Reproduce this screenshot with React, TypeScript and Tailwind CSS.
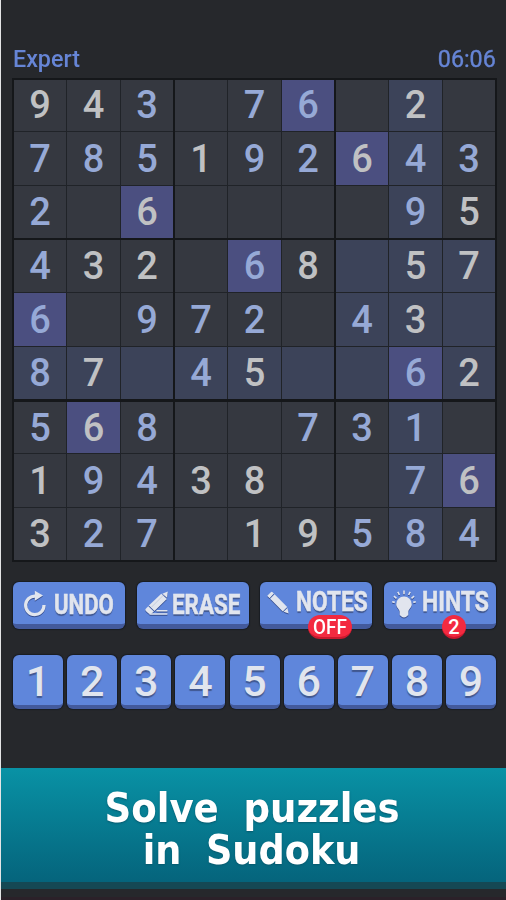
import type { ReactNode } from 'react';

// Each row lists nine cells; "*" marks a player's digit, "." an empty cell.
const ROWS = [
  '9 4 3* . 7* 6* . 2 .',
  '7* 8* 5* 1 9* 2* 6 4* 3*',
  '2* . 6 . . . . 9* 5',
  '4* 3 2 . 6* 8 . 5 7',
  '6* . 9* 7* 2* . 4* 3 .',
  '8* 7 . 4* 5 . . 6* 2',
  '5* 6 8* . . 7* 3* 1* .',
  '1 9* 4* 3 8 . . 7* 6',
  '3 2* 7* . 1 9 5* 8* 4*',
].map((row) => row.split(' '));

const SELECTED = { row: 5, col: 7 };

function Cell({ row, col }: { row: number; col: number }) {
  const value = ROWS[row][col];
  const digit = value[0] === '.' ? '' : value[0];
  const related =
    row === SELECTED.row ||
    col === SELECTED.col ||
    (Math.floor(row / 3) === 1 && Math.floor(col / 3) === 2);
  const bg = digit === '6' ? 'bg-[#4b4f80]' : related ? 'bg-[#3c4359]' : 'bg-[#353840]';
  const color = value.endsWith('*') ? 'text-[#96a9d6]' : 'text-[#c0c1c3]';
  const nudge = row === 0 ? 'pb-px' : row % 3 === 1 ? 'pt-px' : '';
  return (
    <div className={`flex items-center justify-center text-[38px] leading-none font-medium ${nudge} ${bg} ${color}`}>
      {digit}
    </div>
  );
}

const BANDS = [
  'grid-rows-[51px_53px_52px]',
  'mt-[2px] grid-rows-[52px_53px_52px]',
  'mt-[3px] grid-rows-[51px_53px_52px]',
];

function Board() {
  return (
    <div className="mx-[12px] mt-[3px] w-[485px] border-2 border-[#15171a] bg-[#15171a]">
      {BANDS.map((rows, band) => (
        <div key={band} className="flex gap-[2px]">
          {[0, 1, 2].map((box) => (
            <div key={box} className={`grid grid-cols-[52px_53px_52px] gap-px bg-[#202328] ${rows}`}>
              {Array.from({ length: 9 }, (_, i) => (
                <Cell key={i} row={band * 3 + Math.floor(i / 3)} col={box * 3 + (i % 3)} />
              ))}
            </div>
          ))}
        </div>
      ))}
    </div>
  );
}

const ICON = 'block shrink-0 overflow-visible drop-shadow-[0_1px_0_rgba(40,60,120,0.8)]';

function UndoIcon() {
  return (
    <svg className={ICON} width="24" height="28" viewBox="0 0 24 28">
      <path d="M12.5 6.2A9.2 9.2 0 1 0 21 15" fill="none" stroke="#e1e5ee" strokeWidth="3.2" />
      <path d="M11.8 0.8L20 5.6L11.8 10.8Z" fill="#e1e5ee" />
    </svg>
  );
}

function EraseIcon() {
  return (
    <svg className={ICON} width="24" height="26" viewBox="0 0 24 26">
      <path d="M17.3 3.8L22.8 1.4L22 7.8Z" fill="#e1e5ee" />
      <path d="M16.3 3.7L21.8 8.9L9.5 21L3.8 15.5Z" fill="#e1e5ee" />
      <path d="M3.2 16.2L8.8 21.6L7.2 23Q5 24.8 3 23L0.8 21Q-0.2 19.8 0.8 18.7Z" fill="#e1e5ee" />
      <path d="M19 4.6L6.6 17" stroke="#a9b2c8" strokeWidth="0.5" />
      <path d="M11.5 20.7H22.4M4.5 24H22.4" stroke="#e1e5ee" strokeWidth="1.5" />
    </svg>
  );
}

function PencilIcon() {
  return (
    <svg className={ICON} width="22" height="24" viewBox="0 0 22 24">
      <path d="M0.5 4.4L3.8 1.2Q4.7 0.5 5.6 1.3L6.9 2.6L2.6 7.2L0.9 5.6Q0 4.9 0.5 4.4Z" fill="#e1e5ee" />
      <path d="M3.2 7.8L7.6 3.2L20.2 16L15.8 20.5Z" fill="#e1e5ee" />
      <path d="M20.5 17L21.6 22.6L16.6 20.8Z" fill="#e1e5ee" />
    </svg>
  );
}

function BulbIcon() {
  return (
    <svg className={ICON} width="24" height="28" viewBox="0 0 24 28">
      <path
        d="M12 6.6A7.8 7.8 0 0 1 19.8 14.3C19.8 18 16.5 19 16.3 22V25Q16.3 25.7 15.2 25.7Q14.5 27.4 12 27.4Q9.5 27.4 8.8 25.7Q7.7 25.7 7.7 25V22C7.5 19 4.2 18 4.2 14.3A7.8 7.8 0 0 1 12 6.6Z"
        fill="#e1e5ee"
      />
      <path
        d="M12 0.5V4.3M5.8 1.8L7.4 5M18.2 1.8L16.6 5M1.9 6.2L4.5 8.3M22.1 6.2L19.5 8.3M0.2 11.8L2.8 12.4M23.8 11.8L21.2 12.4"
        stroke="#e1e5ee"
        strokeWidth="1.6"
      />
    </svg>
  );
}

function ActionButton({ className, children }: { className: string; children: ReactNode }) {
  return (
    <div
      className={`relative flex h-[47px] w-[112px] items-start rounded-[6px] border-b-[5px] border-[#435a9c] bg-[#5f86db] shadow-[0_0_1px_1px_#191c23] ${className}`}
    >
      {children}
    </div>
  );
}

const LABEL =
  'block h-[24px] origin-left text-[27px] leading-[30px] font-bold text-[#e1e5ee] [-webkit-text-stroke:0.5px_#e1e5ee] [text-shadow:0_2px_1px_#40578f]';

function Badge({ className, children }: { className: string; children: ReactNode }) {
  return (
    <div
      className={`absolute top-[33px] flex h-[24px] items-center justify-center rounded-full border-b-2 border-[#c9192e] bg-[#f32a40] pt-px text-[20px] leading-none font-medium text-white ${className}`}
    >
      {children}
    </div>
  );
}

export default function App() {
  return (
    <main className="flex h-[900px] w-[506px] flex-col overflow-hidden border-l border-[#e4e5e6] bg-[#26282c] font-[Roboto,sans-serif]">
      <div className="-ml-px flex w-[506px] flex-1 flex-col">
        <header className="mt-[43px] flex h-[32px] items-center justify-between pr-[10px] pl-[13px] text-[24px] text-[#6685d6]">
          <span className="origin-left scale-x-[0.97] font-medium">Expert</span>
          <span className="origin-right scale-x-[0.97] [-webkit-text-stroke:0.4px_#6685d6]">06:06</span>
        </header>
        <Board />
        <div className="mt-[20px] ml-[13px] flex w-[483px] justify-between">
          <ActionButton className="pt-[8px] pl-[10px]">
            <UndoIcon />
            <span className={`${LABEL} ml-[7px] scale-x-[0.82]`}>UNDO</span>
          </ActionButton>
          <ActionButton className="pt-[8px] pl-[8px]">
            <EraseIcon />
            <span className={`${LABEL} ml-[3px] scale-x-[0.83]`}>ERASE</span>
          </ActionButton>
          <ActionButton className="pt-[9px] pl-[7px]">
            <PencilIcon />
            <span className={`${LABEL} -mt-[4px] ml-[7px] scale-x-[0.84]`}>NOTES</span>
            <Badge className="left-[48px] w-[44px]">
              <span className="scale-x-[0.94]">OFF</span>
            </Badge>
          </ActionButton>
          <ActionButton className="pt-[8px] pl-[8px]">
            <BulbIcon />
            <span className={`${LABEL} -mt-[3px] ml-[6px] scale-x-[0.85]`}>HINTS</span>
            <Badge className="left-[58px] w-[24px]">2</Badge>
          </ActionButton>
        </div>
        <div className="mt-[26px] ml-[13px] flex w-[483px] justify-between">
          {[1, 2, 3, 4, 5, 6, 7, 8, 9].map((n) => (
            <div
              key={n}
              className="flex h-[54px] w-[50px] items-center justify-center rounded-[6px] border-b-[4px] border-[#435a9c] bg-[#5f86db] pt-[2px] text-[43px] leading-none font-medium text-[#e1e5ee] shadow-[0_0_1px_1px_#191c23] [text-shadow:0_2px_1px_#40578f]"
            >
              {n}
            </div>
          ))}
        </div>
      </div>
      <footer className="flex flex-col bg-[#26282c]">
        <div className="flex h-[114px] flex-col items-center bg-gradient-to-b from-[#0992a5] to-[#05647c] pt-[19px] pr-[3px] font-[DejaVu_Sans,sans-serif] text-[41px] leading-[42px] font-bold text-white [text-shadow:0_1px_2px_#07586c]">
          <div className="scale-x-[0.905] whitespace-nowrap [word-spacing:13px]">Solve puzzles</div>
          <div className="scale-x-[0.895] whitespace-nowrap [word-spacing:13px]">in Sudoku</div>
        </div>
        <div className="h-[7px] bg-[#154854]" />
        <div className="h-[8px]" />
        <div className="h-[3px] bg-[#2b2129]" />
      </footer>
    </main>
  );
}
